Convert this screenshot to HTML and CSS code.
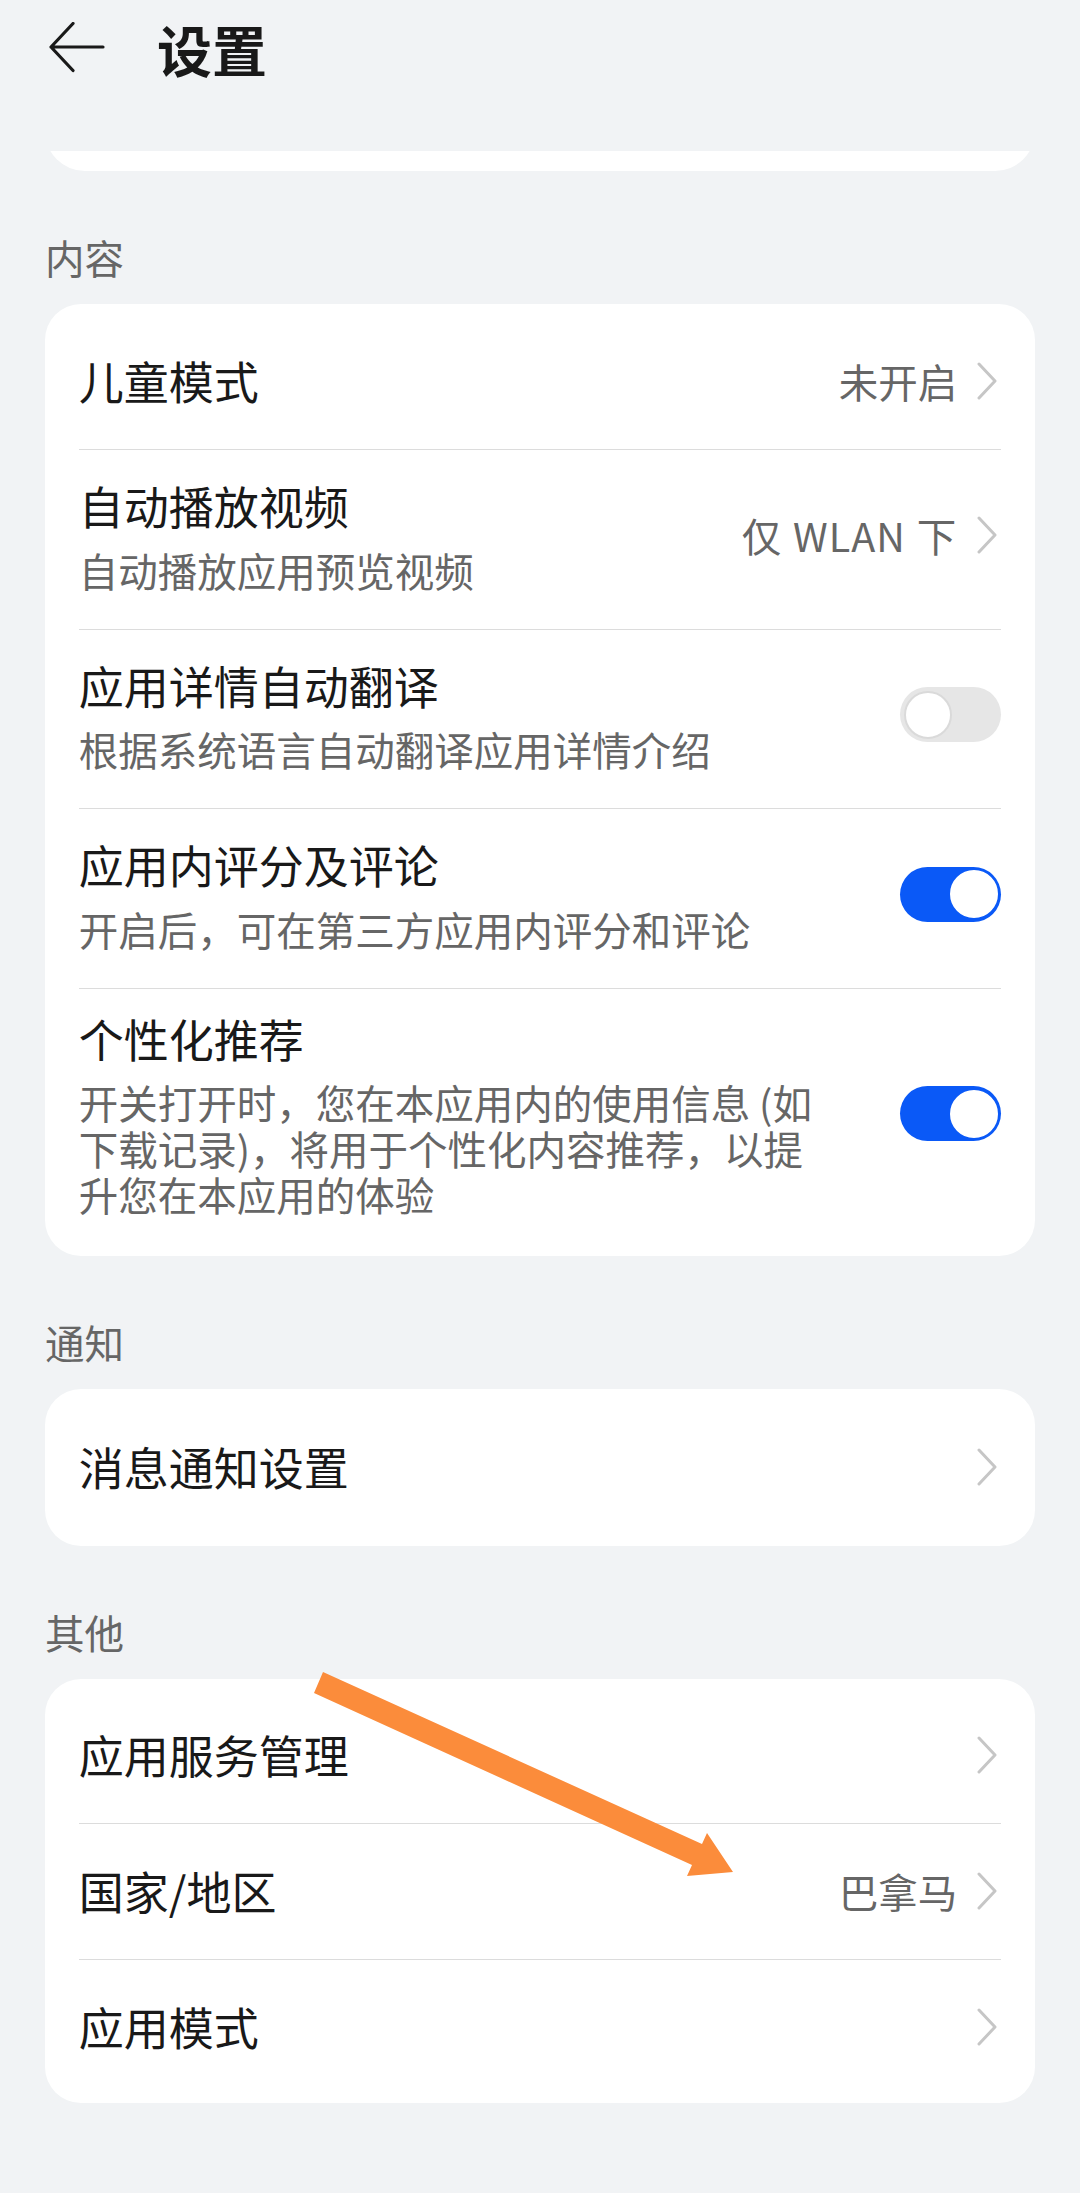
FILE: index.html
```html
<!DOCTYPE html>
<html lang="zh-CN">
<head>
<meta charset="utf-8">
<title>设置</title>
<link rel="stylesheet" href="styles.css">
</head>
<body>
<header class="topbar">
  <svg class="back" viewBox="0 0 56 54" width="56" height="54"><path d="M24 1.5 L2 25 L24 48.5 M2 25 H54" fill="none" stroke="#191919" stroke-width="3.2" stroke-linecap="round" stroke-linejoin="round"/></svg>
  <h1 class="title">设置</h1>
</header>

<div class="card-tail"><div class="card-tail-inner"></div></div>

<div class="section-label">内容</div>
<div class="card">
  <div class="row">
    <div class="row-text"><div class="row-title">儿童模式</div></div>
    <div class="row-value">未开启</div>
    <svg class="chev" viewBox="0 0 22 38" width="22" height="38"><path d="M3 2 L19 19 L3 36" fill="none" stroke="#c6c6c6" stroke-width="3" stroke-linecap="round" stroke-linejoin="round"/></svg>
  </div>
  <div class="row two">
    <div class="row-text">
      <div class="row-title">自动播放视频</div>
      <div class="row-sub">自动播放应用预览视频</div>
    </div>
    <div class="row-value wide">仅 WLAN 下</div>
    <svg class="chev" viewBox="0 0 22 38" width="22" height="38"><path d="M3 2 L19 19 L3 36" fill="none" stroke="#c6c6c6" stroke-width="3" stroke-linecap="round" stroke-linejoin="round"/></svg>
  </div>
  <div class="row two">
    <div class="row-text">
      <div class="row-title">应用详情自动翻译</div>
      <div class="row-sub">根据系统语言自动翻译应用详情介绍</div>
    </div>
    <span class="toggle"><span class="knob"></span></span>
  </div>
  <div class="row two">
    <div class="row-text">
      <div class="row-title">应用内评分及评论</div>
      <div class="row-sub">开启后，可在第三方应用内评分和评论</div>
    </div>
    <span class="toggle on"><span class="knob"></span></span>
  </div>
  <div class="row tall">
    <div class="row-text">
      <div class="row-title">个性化推荐</div>
      <div class="row-sub">开关打开时，您在本应用内的使用信息 (如下载记录)，将用于个性化内容推荐，以提升您在本应用的体验</div>
    </div>
    <span class="toggle on"><span class="knob"></span></span>
  </div>
</div>

<div class="section-label">通知</div>
<div class="card solo">
  <div class="row">
    <div class="row-text"><div class="row-title">消息通知设置</div></div>
    <svg class="chev" viewBox="0 0 22 38" width="22" height="38"><path d="M3 2 L19 19 L3 36" fill="none" stroke="#c6c6c6" stroke-width="3" stroke-linecap="round" stroke-linejoin="round"/></svg>
  </div>
</div>

<div class="section-label">其他</div>
<div class="card compact">
  <div class="row">
    <div class="row-text"><div class="row-title">应用服务管理</div></div>
    <svg class="chev" viewBox="0 0 22 38" width="22" height="38"><path d="M3 2 L19 19 L3 36" fill="none" stroke="#c6c6c6" stroke-width="3" stroke-linecap="round" stroke-linejoin="round"/></svg>
  </div>
  <div class="row">
    <div class="row-text"><div class="row-title">国家/地区</div></div>
    <div class="row-value">巴拿马</div>
    <svg class="chev" viewBox="0 0 22 38" width="22" height="38"><path d="M3 2 L19 19 L3 36" fill="none" stroke="#c6c6c6" stroke-width="3" stroke-linecap="round" stroke-linejoin="round"/></svg>
  </div>
  <div class="row">
    <div class="row-text"><div class="row-title">应用模式</div></div>
    <svg class="chev" viewBox="0 0 22 38" width="22" height="38"><path d="M3 2 L19 19 L3 36" fill="none" stroke="#c6c6c6" stroke-width="3" stroke-linecap="round" stroke-linejoin="round"/></svg>
  </div>
</div>

<svg class="annotation" viewBox="0 0 1080 2193" width="1080" height="2193"><polygon points="323,1672 702,1844 707,1833 733,1872 687,1876 692,1865 314,1693" fill="#fb8c3b"/></svg>
</body>
</html>
```

FILE: styles.css
```css
* {
  box-sizing: border-box;
  margin: 0;
  padding: 0;
}

html,
body {
  background: #f1f3f5;
}

body {
  position: relative;
  width: 1080px;
  min-height: 2193px;
  font-family: "Noto Sans CJK SC", "Noto Sans", sans-serif;
  color: #191919;
}

.topbar {
  height: 96px;
  display: flex;
  align-items: center;
  padding-left: 49px;
}

.back {
  display: block;
  flex: none;
  margin-top: 2px;
}

.title {
  font-size: 55px;
  font-weight: 700;
  line-height: 64px;
  margin-left: 52px;
}

.card-tail {
  margin: 55px 45px 0;
  height: 20px;
  overflow: hidden;
}

.card-tail-inner {
  height: 80px;
  margin-top: -60px;
  background: #fff;
  border-radius: 40px;
}

.section-label {
  padding: 58px 45px 19px;
  font-size: 39.5px;
  line-height: 56px;
  color: #666;
}

.card {
  margin: 0 45px;
  background: #fff;
  border-radius: 36px;
  padding: 8px 33.75px;
}

.card.solo {
  padding: 10px 33.75px;
}

.row {
  display: flex;
  align-items: center;
  min-height: 137px;
}

.card.compact .row {
  min-height: 136px;
}

.row + .row {
  border-top: 1px solid #dcdcdc;
}

.row.two {
  padding: 28px 0 36px;
}

.row.tall {
  padding: 22px 0 30.5px;
}

.row-text {
  flex: 1;
  min-width: 0;
  max-width: 750px;
}

.row-title {
  font-size: 45px;
  line-height: 56px;
}

.row-sub {
  font-size: 39.5px;
  line-height: 46px;
  color: #666;
  margin-top: 12.5px;
}

.row-value {
  margin-left: auto;
  font-size: 39.5px;
  line-height: 56px;
  color: #666;
  white-space: nowrap;
}

.row-value.wide {
  letter-spacing: 1px;
  word-spacing: 1px;
}

.chev {
  display: block;
  flex: none;
  margin-left: 19px;
  margin-right: 3px;
}

.row-text + .chev {
  margin-left: auto;
}

.toggle {
  flex: none;
  margin-left: auto;
  width: 101px;
  height: 55px;
  border-radius: 28px;
  background: #e6e6e6;
  display: flex;
  align-items: center;
  padding: 0 3.5px;
}

.toggle.on {
  background: #0a59f7;
  justify-content: flex-end;
}

.knob {
  width: 48px;
  height: 48px;
  border-radius: 50%;
  background: #fff;
  border: 2px solid #dadada;
}

.toggle.on .knob {
  border-color: #fff;
}

.annotation {
  position: absolute;
  top: 0;
  left: 0;
  pointer-events: none;
}
```
